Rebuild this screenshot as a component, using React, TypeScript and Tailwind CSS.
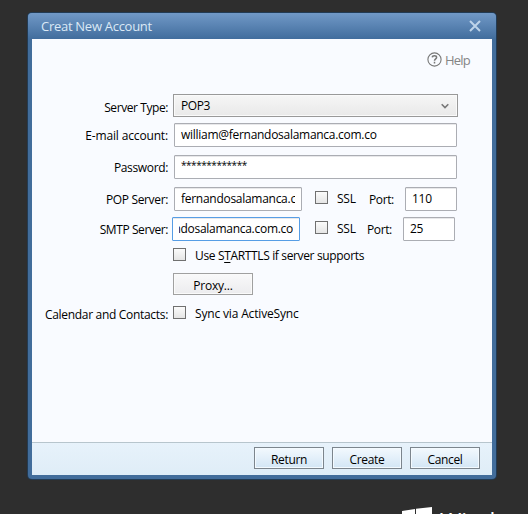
import type { ReactNode } from "react";

function Row({ label, height, labelTop = "pt-[5px]", labelTracking = "tracking-[-0.35px]", gap = "pl-[5px]", children }: {
  label?: string; height: string; labelTop?: string; labelTracking?: string; gap?: string; children: ReactNode;
}) {
  return (
    <div className={`flex items-start ${height}`}>
      <div className={`flex w-[136px] shrink-0 justify-end ${labelTop} ${labelTracking}`}>{label}</div>
      <div className={`flex items-start ${gap}`}>{children}</div>
    </div>
  );
}

function Field({ width, focused, end, children }: { width: string; focused?: boolean; end?: boolean; children: ReactNode }) {
  return (
    <div className={`h-6 shrink-0 rounded-[1px] border bg-white px-1.5 pt-[3px] shadow-[inset_0_1px_0_#e8e8ea] ${width} ${focused ? "border-[#569de5]" : "border-[#abadb3]"}`}>
      <div className={`flex overflow-hidden tracking-[-0.28px] ${end ? "justify-end" : ""}`}><span className="shrink-0">{children}</span></div>
    </div>
  );
}

function Check() {
  return <div className="size-[13px] shrink-0 border border-[#707070] bg-linear-to-b from-[#fbfbfb] to-[#e5e5e5]" />;
}

function FooterButton({ children }: { children: ReactNode }) {
  return (
    <button className="h-[22px] w-[70px] border border-[#7c858d] bg-linear-to-b from-[#f3f9fe] to-[#d3e6f5] pt-[3px] tracking-[-0.35px] shadow-[inset_0_0_0_1px_#f3faff]">
      {children}
    </button>
  );
}

export default function App() {
  return (
    <div className="relative h-[514px] w-[528px] overflow-hidden bg-[#2e2e2e] pl-7 pt-[13px] font-['Open_Sans','Noto_Sans',sans-serif] text-[12px] leading-4 tracking-[-0.22px] whitespace-nowrap text-black">
      <main className="flex h-[466px] w-[468px] flex-col rounded-[4px] bg-[#426d9b] px-1 pb-1 shadow-[0_0_0_1px_#223b54]">
        <header className="-mx-1 flex h-[26px] shrink-0 items-center justify-between rounded-t-[4px] bg-linear-to-b from-[#7199c7] to-[#416d9d] pl-[13px] pr-[15px] text-[#dbe9f6]">
          <span className="-mt-px text-[13px] tracking-[-0.28px]">Creat New Account</span>
          <svg width="12" height="12" viewBox="0 0 12 12" fill="none" stroke="#bdd3e9" strokeWidth="2"><path d="m1 1 10 10M11 1 1 11" /></svg>
        </header>
        <section className="flex-1 bg-[#f9fbff]">
          <div className="flex h-[55px] items-start justify-end pr-[22px] pt-[13px] text-[#858585]">
            <svg className="mr-[3px]" width="15" height="15" viewBox="0 0 15 15" fill="none" stroke="#777">
              <circle cx="7.5" cy="7.5" r="6.6" strokeWidth="1.1" />
              <path d="M5.3 5.4C5.4 3.2 9.6 3.2 9.6 5.4c0 1.4-2.1 1.5-2.1 3.3M7.5 9.8v1.6" strokeWidth="1.5" />
            </svg>
            <span className="text-[13px] tracking-[-0.75px]">Help</span>
          </div>
          <Row label="Server Type:" height="h-[29px]" labelTop="pt-[6px]" labelTracking="tracking-[-0.42px]">
            <div className="flex h-[23px] w-[285px] justify-between border border-[#999] bg-linear-to-b from-[#f6f6f6] to-[#e9e9e9] pl-[7px] pr-2 pt-[3px] shadow-[inset_0_0_0_1px_#fafafa]">
              <span className="tracking-[-0.45px]">POP3</span>
              <svg className="mt-[5px]" width="8" height="7" viewBox="0 0 8 7" fill="none" stroke="#777" strokeWidth="1.6"><path d="m.7 1.2 3.3 3.3 3.3-3.3" /></svg>
            </div>
          </Row>
          <Row label="E-mail account:" height="h-8" labelTracking="tracking-[-0.15px]" gap="pl-1.5"><Field width="w-[283px]">william@fernandosalamanca.com.co</Field></Row>
          <Row label="Password:" height="h-8" gap="pl-1.5">
            <Field width="w-[283px]"><span className="block text-[10px] leading-3 tracking-[-0.45px]">*************</span></Field>
          </Row>
          <Row label="POP Server:" height="h-[30px]" gap="pl-1.5">
            <Field width="w-32">fernandosalamanca.com.co</Field>
            <div className="flex w-[103px] pl-[13px] pt-1"><Check /><span className="w-[41px] pl-[9px]">SSL</span><span className="pt-px tracking-[-0.4px]">Port:</span></div>
            <Field width="w-[52px]">110</Field>
          </Row>
          <Row label="SMTP Server:" height="h-[31px]" labelTracking="tracking-[-0.42px]" gap="pl-1">
            <Field width="w-32" focused end>fernandosalamanca.com.co</Field>
            <div className="flex w-[103px] pl-[15px] pt-1"><Check /><span className="w-[39px] pl-[9px]">SSL</span><span className="pt-px tracking-[-0.4px]">Port:</span></div>
            <Field width="w-[52px]">25</Field>
          </Row>
          <Row height="h-[25px]">
            <Check /><span className="pl-[9px] tracking-[-0.35px]">Use S<u className="underline-offset-2">T</u>ARTTLS if server supports</span>
          </Row>
          <Row height="h-[33px]">
            <button className="h-[22px] w-20 border border-[#a0a0a0] bg-linear-to-b from-[#f9f9fa] to-[#ececee] pt-[3px] shadow-[inset_0_0_0_1px_#fafafa]">Proxy...</button>
          </Row>
          <Row label="Calendar and Contacts:" height="h-6" labelTop="pt-px" labelTracking="tracking-[-0.31px]">
            <Check /><span className="pl-[9px] tracking-[-0.16px]">Sync via ActiveSync</span>
          </Row>
        </section>
        <footer className="flex h-[33px] shrink-0 items-start justify-end gap-2 border-t border-[#b7c5cd] bg-linear-to-b from-[#e7f2fb] to-[#dfedf7] pr-3 pt-1">
          <FooterButton>Return</FooterButton><FooterButton>Create</FooterButton><FooterButton>Cancel</FooterButton>
        </footer>
      </main>
      <div className="absolute left-[402px] top-[507px] flex items-start gap-2 text-white">
        <svg width="30" height="27" viewBox="0 0 30 27" fill="white"><path d="m0 4 13-2v12H0ZM14 1.8 30 0v14H14ZM0 15h13v11L0 24ZM14 15h16v12l-16-2Z" /></svg>
        <span className="-mt-[3px] text-[23px] leading-[34px] font-normal tracking-normal">Windows</span>
      </div>
    </div>
  );
}
